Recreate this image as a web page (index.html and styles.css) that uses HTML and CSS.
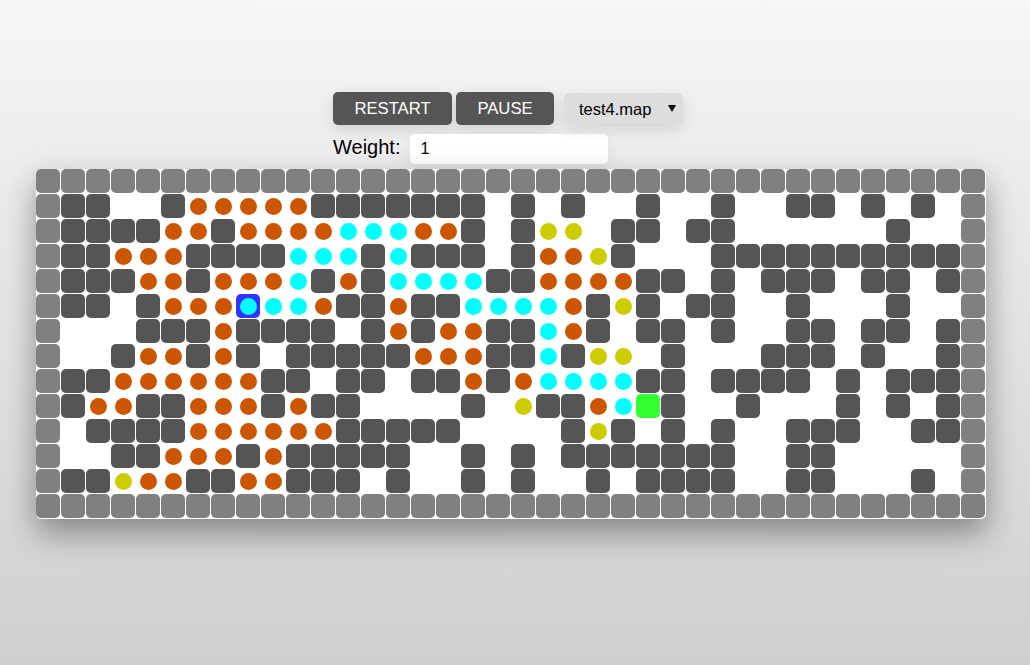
FILE: index.html
```html
<!DOCTYPE html>
<html lang="en">
<head>
<meta charset="utf-8">
<title>Maze</title>
<link rel="stylesheet" href="styles.css">
</head>
<body>
<main class="page">
  <div class="controls">
    <div class="actions">
      <button class="btn btn-restart" type="button">RESTART</button>
      <button class="btn btn-pause" type="button">PAUSE</button>
      <div class="select-wrap">
        <select class="map-select"><option>test4.map</option></select>
      </div>
    </div>
    <div class="weight">
      <label class="weight-label" for="weight">Weight:</label>
      <input class="weight-input" id="weight" type="text" value="1">
    </div>
  </div>
  <div class="board" id="board"></div>
</main>
<script src="app.js"></script>
</body>
</html>
```
FILE: styles.css
```css
html { height: 100%; }
body {
  margin: 0;
  min-height: 100%;
  background: linear-gradient(#f6f6f6, #cfcfcf);
  font-family: "Liberation Sans", Arial, sans-serif;
  color: #000;
}
.page {
  display: flex;
  flex-direction: column;
  padding: 92px 0 0 36px;
}
.controls {
  display: flex;
  flex-direction: column;
  gap: 9px;
  margin: 0 0 5px 297px;
}
.actions {
  display: flex;
  align-items: center;
  height: 33px;
}
.btn {
  height: 33px;
  padding: 0;
  border: 0;
  border-radius: 5px;
  background: #555;
  color: #fff;
  font: 16.67px "Liberation Sans", Arial, sans-serif;
  box-shadow: 0 5px 15px rgba(0, 0, 0, 0.12);
}
.btn-restart { width: 119px; margin-right: 4px; }
.btn-pause { width: 98px; margin-right: 10px; }
.select-wrap {
  position: relative;
  width: 119px;
  height: 31px;
}
.select-wrap::after {
  content: "";
  position: absolute;
  top: 12px;
  right: 7px;
  border-left: 4px solid transparent;
  border-right: 4px solid transparent;
  border-top: 7px solid #000;
  pointer-events: none;
}
.map-select {
  appearance: none;
  display: block;
  width: 119px;
  height: 31px;
  padding: 0 0 0 15px;
  border: 0;
  border-radius: 5px;
  background-color: #ddd;
  color: #000;
  font: 16.5px "Liberation Sans", Arial, sans-serif;
  box-shadow: 0 5px 15px rgba(0, 0, 0, 0.12);
}
.weight {
  display: flex;
  align-items: center;
  gap: 10px;
  height: 30px;
}
.weight-label { font-size: 20px; padding-bottom: 4px; }
.weight-input {
  box-sizing: border-box;
  width: 198px;
  height: 30px;
  padding: 0 10px;
  border: 0;
  border-radius: 5px;
  background: #fff;
  color: #000;
  font: 16px "Liberation Sans", Arial, sans-serif;
  box-shadow: 0 5px 15px rgba(0, 0, 0, 0.08);
}
.board {
  display: grid;
  grid-template-columns: repeat(38, 24px);
  grid-auto-rows: 24px;
  gap: 1px;
  width: max-content;
  padding: 0 1px 1px 0;
  border-radius: 5px;
  background: #fff;
  box-shadow: 0 14px 32px rgba(0, 0, 0, 0.38);
}
.cell {
  display: flex;
  align-items: center;
  justify-content: center;
  border-radius: 5px;
}
.cell-edge { background: #808080; }
.cell-wall { background: #555; }
.cell-start { background: #33f; }
.cell-goal { background: #3f3; }
.dot {
  width: 17px;
  height: 17px;
  border-radius: 50%;
}
.dot-orange { background: #c50; }
.dot-cyan { background: #0ff; }
.dot-yellow { background: #cc0; }
```
FILE: app.js
```js
var rows = [
  "BBBBBBBBBBBBBBBBBBBBBBBBBBBBBBBBBBBBBB",
  "B##..#ooooo#######.#.#..#..#..##.#.#.B",
  "B####oo#oooocccoo#.#yy.##.##......#..B",
  "B##ooo####ccc#c###.#ooy#...##########B",
  "B###oo#oooc#o#cccc##oooo##.#.###.##.#B",
  "B##.#oooScco##o##cccco#y#.##..#...#..B",
  "B...###o####.#o#oo##co#.##.#..##.##.#B",
  "B..#oo#o#.#####ooo##c#yy.#...###.#..#B",
  "B##oooooo##.##.##o#occcc##.####.#.###B",
  "B#oo##ooo#o##....#.y##ocG#..#...#.#.#B",
  "B.####oooooo#####....#y#.#.#..###..##B",
  "B..##ooo#o#####..#.#.#######..##.....B",
  "B##yoo##oo###.#..#.#..#.####..##...#.B",
  "BBBBBBBBBBBBBBBBBBBBBBBBBBBBBBBBBBBBBB"
];
var cellClass = { B: "cell-edge", "#": "cell-wall", S: "cell-start", G: "cell-goal" };
var dotClass = { o: "dot-orange", c: "dot-cyan", y: "dot-yellow", S: "dot-cyan" };
var board = document.getElementById("board");
rows.forEach(function (row) {
  row.split("").forEach(function (ch) {
    var cell = document.createElement("div");
    cell.className = "cell " + (cellClass[ch] || "");
    if (dotClass[ch]) {
      var dot = document.createElement("div");
      dot.className = "dot " + dotClass[ch];
      cell.appendChild(dot);
    }
    board.appendChild(cell);
  });
});
```
